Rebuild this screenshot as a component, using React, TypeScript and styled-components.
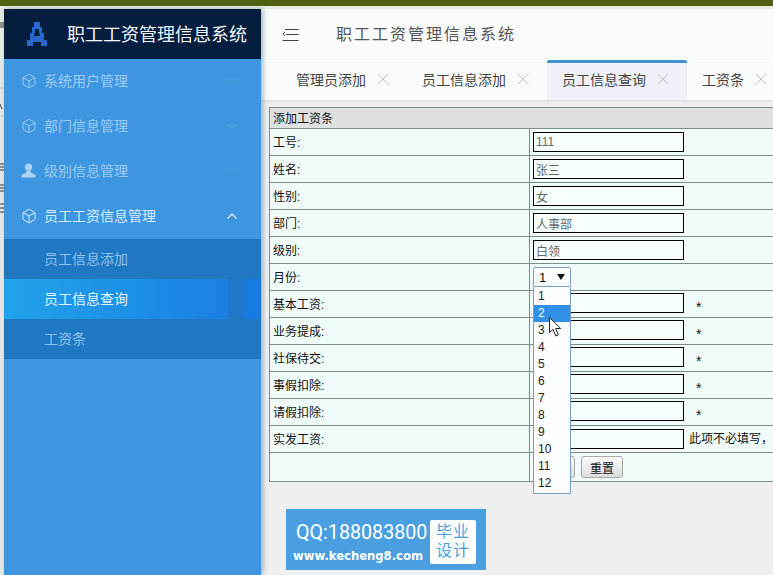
import styled, { createGlobalStyle } from 'styled-components';
import { Box, ChevronDown, ChevronUp, X } from 'lucide-react';

const GlobalStyle = createGlobalStyle`
  html, body {
    margin: 0;
    padding: 0;
    height: 575px;
    overflow: hidden;
    font-family: "Liberation Sans", "Noto Sans CJK SC", sans-serif;
  }
  * {
    box-sizing: border-box;
  }
`;

const menus = [
  { name: '系统用户管理', icon: 'box' },
  { name: '部门信息管理', icon: 'box' },
  { name: '级别信息管理', icon: 'user' },
];
const subMenus = ['员工信息添加', '员工信息查询', '工资条'];
const tabs = ['管理员添加', '员工信息添加', '员工信息查询', '工资条'];
const readRows = [
  { label: '工号:', value: '111' },
  { label: '姓名:', value: '张三' },
  { label: '性别:', value: '女' },
  { label: '部门:', value: '人事部' },
  { label: '级别:', value: '白领' },
];
const moneyRows = ['基本工资:', '业务提成:', '社保待交:', '事假扣除:', '请假扣除:'];
const months = [1, 2, 3, 4, 5, 6, 7, 8, 9, 10, 11, 12];

const Page = styled.div`
  width: 773px;
  height: 575px;
  position: relative;
  overflow: hidden;
  background: #f0f0f0;
`;

const TopStrip = styled.div`
  height: 9px;
  background: #e8efdf;
  border-top: 6px solid #4f6213;
`;

const Body = styled.div`
  display: flex;
  height: 566px;
`;

const LeftEdge = styled.div`
  width: 4px;
  flex-shrink: 0;
  background: #e6e9e3;
`;

const Sidebar = styled.aside`
  width: 257px;
  flex-shrink: 0;
  background: #3f96e0;
  box-shadow: 2px 0 5px rgba(60, 90, 120, 0.45);
  position: relative;
  z-index: 2;
`;

const Brand = styled.div`
  height: 50px;
  background: #051d3f;
  display: flex;
  align-items: center;
  padding-left: 22px;
  gap: 19px;
`;

const BrandTitle = styled.span`
  font-size: 18px;
  color: #f2f6fa;
  white-space: nowrap;
  padding-bottom: 2px;
`;

const MenuRow = styled.div<{ $open?: boolean }>`
  height: 45px;
  display: flex;
  align-items: center;
  padding: 0 21px 2px 17px;
  font-size: 14px;
  color: ${(p) => (p.$open ? '#d8ecfb' : '#9ccbf1')};
`;

const MenuIcon = styled.span`
  width: 23px;
  display: flex;
  align-items: center;
`;

const MenuName = styled.span`
  flex: 1;
  padding-bottom: 2px;
`;

const SubMenu = styled.div`
  background: #1f78c1;
`;

const SubRow = styled.div<{ $active?: boolean }>`
  height: 40px;
  display: flex;
  align-items: center;
  padding: 0 0 2px 40px;
  font-size: 14px;
  color: ${(p) => (p.$active ? '#e6f4fd' : '#8dc1ee')};
  background: ${(p) =>
    p.$active
      ? 'linear-gradient(90deg, #22a3ea 0, #1a80e2 224px, #1f78c8 224px, #1f78c8 240px, #1779e2 240px)'
      : 'transparent'};
`;

const Main = styled.main`
  flex: 1;
  min-width: 0;
  overflow: hidden;
`;

const TopBar = styled.div`
  height: 51px;
  background: #fafcfb;
  display: flex;
  align-items: center;
  padding-left: 21px;
  gap: 37px;
`;

const TopTitle = styled.span`
  font-size: 16px;
  letter-spacing: 2px;
  color: #555;
  white-space: nowrap;
  padding-bottom: 3px;
`;

const TabBar = styled.div`
  height: 40px;
  background: #fafcfb;
  display: flex;
  padding-left: 20px;
  box-shadow: 0 1px 3px rgba(0, 0, 0, 0.1);
  white-space: nowrap;
`;

const Tab = styled.div<{ $active?: boolean }>`
  flex-shrink: 0;
  display: flex;
  align-items: center;
  gap: 7px;
  padding: 0 14px 5px 15px;
  font-size: 14px;
  color: #444;
  background: ${(p) => (p.$active ? '#eef2f8' : 'transparent')};
  border-top: 3px solid ${(p) => (p.$active ? '#3f93d2' : 'transparent')};
  border-radius: 2px 2px 0 0;
  svg {
    color: #c4c4c4;
  }
`;

const Content = styled.div`
  padding: 7px 0 0 8px;
`;

const FormTable = styled.table`
  width: 640px;
  table-layout: fixed;
  border-collapse: collapse;
  background: #f0fcf9;
  border: 1px solid #222;
  font-size: 12px;
  color: #111;

  td {
    border: 1px solid #7f8c88;
    padding: 0 0 0 3px;
    height: 27px;
    white-space: nowrap;
  }

  td:first-child {
    padding-bottom: 2px;
  }
`;

const TitleCell = styled.td`
  && {
    height: 21px;
    background: #dfe2e1;
    border-bottom-color: #7f8c88;
  }
`;

const LabelCol = styled.col`
  width: 260px;
`;

const EmptyCell = styled.td`
  && {
    height: 29px;
  }
`;

const TextInput = styled.input`
  width: 151px;
  height: 20px;
  padding: 0 2px;
  border: 1px solid #000;
  background: #f6fffc;
  color: #666;
  font: 12px "Liberation Sans", "Noto Sans CJK SC", sans-serif;
  vertical-align: middle;
`;

const Star = styled.span`
  margin-left: 12px;
  font-size: 14px;
  vertical-align: -5px;
`;

const Hint = styled.span`
  margin-left: 5px;
`;

const SelectWrap = styled.div`
  position: relative;
  width: 38px;
  height: 20px;
`;

const SelectBox = styled.div`
  height: 20px;
  border: 1px solid #7c9cc8;
  border-radius: 2px;
  background: #fbfdfd;
  display: flex;
  align-items: center;
  justify-content: space-between;
  padding: 0 5px 0 5px;
  font-size: 13px;
`;

const Arrow = styled.span`
  width: 0;
  height: 0;
  border-left: 4px solid transparent;
  border-right: 4px solid transparent;
  border-top: 6px solid #111;
`;

const OptionList = styled.ul`
  position: absolute;
  top: 20px;
  left: 0;
  width: 38px;
  margin: 0;
  padding: 1px 0;
  list-style: none;
  background: #fbfdfe;
  border: 1px solid #7c9cc8;
  border-top: none;
  z-index: 3;
`;

const OptionItem = styled.li<{ $active?: boolean }>`
  height: 17px;
  line-height: 17px;
  padding-left: 4px;
  font-size: 12px;
  color: ${(p) => (p.$active ? '#fff' : '#222')};
  background: ${(p) => (p.$active ? '#3090e8' : 'transparent')};
`;

const Pointer = styled.svg`
  position: absolute;
  left: 15px;
  top: 30px;
  z-index: 4;
`;

const Buttons = styled.div`
  display: flex;
  gap: 6px;
`;

const FormButton = styled.button`
  width: 42px;
  height: 22px;
  padding: 0;
  border: 1px solid #a9a9a9;
  border-radius: 3px;
  background: linear-gradient(#fbfbfb, #dcdcdc);
  font: 12px "Liberation Sans", "Noto Sans CJK SC", sans-serif;
  color: #111;
`;

const Watermark = styled.div`
  position: absolute;
  left: 286px;
  top: 509px;
  width: 200px;
  height: 61px;
  background: #4a9fe0;
  display: flex;
  align-items: flex-start;
  justify-content: space-between;
  padding: 11px 10px 0 7px;
  z-index: 5;
`;

const MarkText = styled.div`
  display: flex;
  flex-direction: column;
  color: #fff;
`;

const MarkQQ = styled.span`
  font-family: Roboto, sans-serif;
  font-size: 19.7px;
  line-height: 26px;
  margin-left: 3px;
  white-space: nowrap;
`;

const MarkUrl = styled.span`
  font-family: "DejaVu Sans", sans-serif;
  font-weight: 700;
  font-size: 11.6px;
  line-height: 20px;
  white-space: nowrap;
`;

const MarkBadge = styled.div`
  width: 46px;
  height: 44px;
  background: #fff;
  border-radius: 2px;
  color: #4a9fe0;
  font-size: 16px;
  line-height: 19px;
  letter-spacing: 1px;
  text-align: center;
  padding-top: 2px;
`;

const LeftScraps = () => (
  <svg width="4" height="566" style={{ display: 'block' }}>
    <path d="M0 14h4M0 16h4M0 18h4" stroke="#333" />
    <path d="M0 79h4M0 107h4" stroke="#c9ccc8" />
    <path d="M0 95l2 5" stroke="#444" />
    <path d="M0 155h4M0 158h4M0 161h4M0 176h4M0 179h4M0 182h4M0 195h4M0 199h4M0 203h4" stroke="#333" />
  </svg>
);

const Logo = () => (
  <svg width="22" height="26" viewBox="0 0 22 26">
    <path d="M8 1h6v5h2v6h2v7h3v6h-6v-4H7v4H1v-6h3v-7h2V6h2z" fill="#2767c9" />
    <path d="M9.5 8h3l1.5 7H8z" fill="#051d3f" />
  </svg>
);

const FoldIcon = () => (
  <svg width="17" height="14" viewBox="0 0 17 14" fill="none" stroke="#444" strokeWidth="1">
    <path d="M3 1.5h13.5M4 6.5h12.5M0.5 12.5h16" />
    <path d="M3 4L0.8 6l2.2 2" />
  </svg>
);

const UserIcon = () => (
  <svg width="15" height="15" viewBox="0 0 15 15" fill="#a9d2f3">
    <circle cx="7.5" cy="4" r="3.6" />
    <path d="M5.5 7.5h4l.6 2.3 4.4 2v2.7H.5v-2.7l4.4-2z" />
  </svg>
);

export default function App() {
  return (
    <Page>
      <GlobalStyle />
      <TopStrip />
      <Body>
        <LeftEdge>
          <LeftScraps />
        </LeftEdge>
        <Sidebar>
          <Brand>
            <Logo />
            <BrandTitle>职工工资管理信息系统</BrandTitle>
          </Brand>
          {menus.map((m) => (
            <MenuRow key={m.name}>
              <MenuIcon>{m.icon === 'box' ? <Box size={16} strokeWidth={1.5} /> : <UserIcon />}</MenuIcon>
              <MenuName>{m.name}</MenuName>
              <ChevronDown size={16} color="#4d9cde" />
            </MenuRow>
          ))}
          <MenuRow $open>
            <MenuIcon>
              <Box size={16} strokeWidth={1.5} />
            </MenuIcon>
            <MenuName>员工工资信息管理</MenuName>
            <ChevronUp size={16} color="#d8ecfb" />
          </MenuRow>
          <SubMenu>
            {subMenus.map((s, idx) => (
              <SubRow key={s} $active={idx === 1}>
                {s}
              </SubRow>
            ))}
          </SubMenu>
        </Sidebar>
        <Main>
          <TopBar>
            <FoldIcon />
            <TopTitle>职工工资管理信息系统</TopTitle>
          </TopBar>
          <TabBar>
            {tabs.map((t, idx) => (
              <Tab key={t} $active={idx === 2}>
                {t}
                <X size={20} strokeWidth={1.2} />
              </Tab>
            ))}
          </TabBar>
          <Content>
            <FormTable>
              <colgroup>
                <LabelCol />
                <col />
              </colgroup>
              <tbody>
                <tr>
                  <TitleCell colSpan={2}>添加工资条</TitleCell>
                </tr>
                {readRows.map((r) => (
                  <tr key={r.label}>
                    <td>{r.label}</td>
                    <td>
                      <TextInput readOnly value={r.value} />
                    </td>
                  </tr>
                ))}
                <tr>
                  <td>月份:</td>
                  <td>
                    <SelectWrap>
                      <SelectBox>
                        1<Arrow />
                      </SelectBox>
                      <OptionList>
                        {months.map((n) => (
                          <OptionItem key={n} $active={n === 2}>
                            {n}
                          </OptionItem>
                        ))}
                        <Pointer width="13" height="21" viewBox="0 0 13 21">
                          <path
                            d="M0.5 0.5v15l3.6-3.2 2.6 6.6 2.6-1.1-2.6-6.3h5z"
                            fill="#fff"
                            stroke="#222"
                            strokeWidth="1"
                          />
                        </Pointer>
                      </OptionList>
                    </SelectWrap>
                  </td>
                </tr>
                {moneyRows.map((label) => (
                  <tr key={label}>
                    <td>{label}</td>
                    <td>
                      <TextInput readOnly />
                      <Star>*</Star>
                    </td>
                  </tr>
                ))}
                <tr>
                  <td>实发工资:</td>
                  <td>
                    <TextInput readOnly />
                    <Hint>此项不必填写，</Hint>
                  </td>
                </tr>
                <tr>
                  <EmptyCell />
                  <td>
                    <Buttons>
                      <FormButton>提交</FormButton>
                      <FormButton>重置</FormButton>
                    </Buttons>
                  </td>
                </tr>
              </tbody>
            </FormTable>
          </Content>
        </Main>
      </Body>
      <Watermark>
        <MarkText>
          <MarkQQ>QQ:188083800</MarkQQ>
          <MarkUrl>www.kecheng8.com</MarkUrl>
        </MarkText>
        <MarkBadge>
          毕业
          <br />
          设计
        </MarkBadge>
      </Watermark>
    </Page>
  );
}
